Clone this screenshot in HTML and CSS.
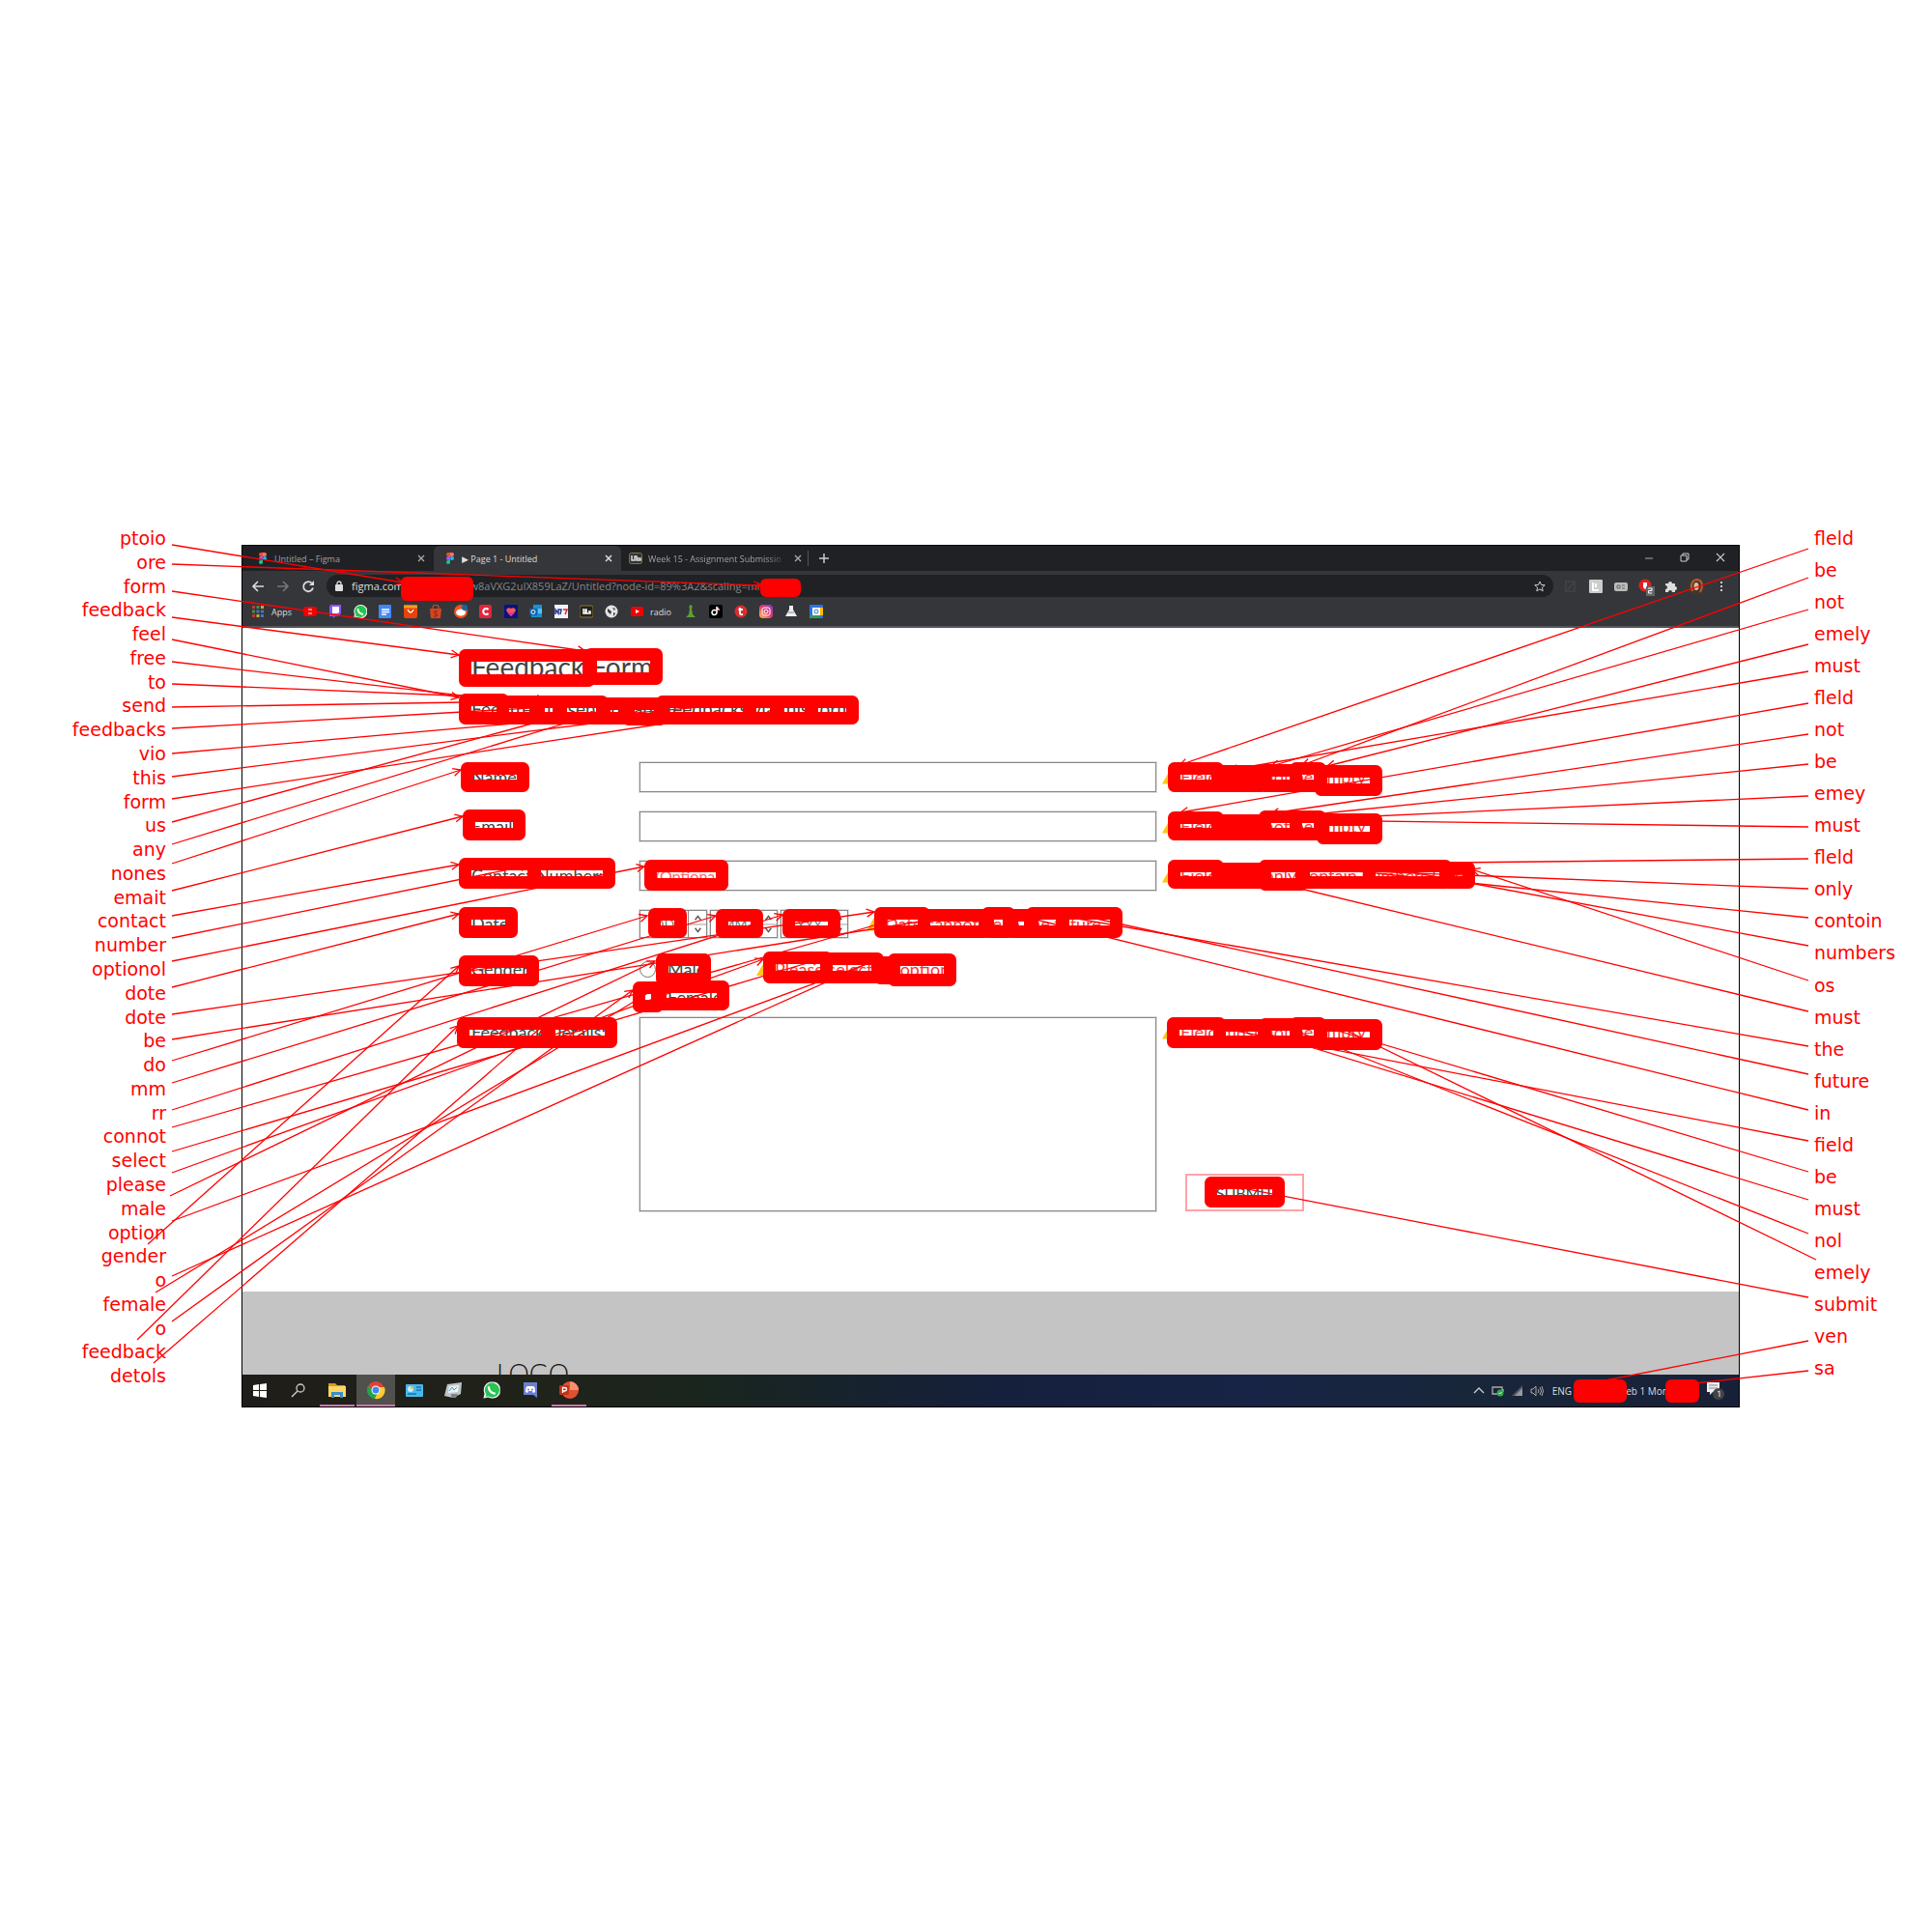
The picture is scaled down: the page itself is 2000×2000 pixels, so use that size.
FILE: index.html
```html
<!DOCTYPE html>
<html lang="en">
<head>
<meta charset="utf-8">
<title>Text detection results</title>
<link rel="stylesheet" href="styles.css">
</head>
<body>
<main class="figure">
  <ol class="labels labels-left">
    <li>ptoio</li><li>ore</li><li>form</li><li>feedback</li><li>feel</li><li>free</li><li>to</li><li>send</li><li>feedbacks</li><li>vio</li><li>this</li><li>form</li><li>us</li><li>any</li><li>nones</li><li>emait</li><li>contact</li><li>number</li><li>optionol</li><li>dote</li><li>dote</li><li>be</li><li>do</li><li>mm</li><li>rr</li><li>connot</li><li>select</li><li>please</li><li>male</li><li>option</li><li>gender</li><li>o</li><li>female</li><li>o</li><li>feedback</li><li>detols</li>
  </ol>

  <section class="screen">
    <header class="browser">
      <div class="tabs">
        <div class="tab">
          <svg class="figma" viewBox="0 0 8 12"><use href="#figma"/></svg>
          <span class="tab-title">Untitled – Figma</span>
          <button class="bare" aria-label="Close tab"><svg width="8" height="8" viewBox="0 0 8 8"><path d="M1 1l6 6M7 1L1 7" stroke="#aaa" stroke-width="1.3"/></svg></button>
        </div>
        <div class="tab tab-active">
          <svg class="figma" viewBox="0 0 8 12"><use href="#figma"/></svg>
          <span class="tab-title">▶ Page 1 - Untitled</span>
          <button class="bare" aria-label="Close tab"><svg width="8" height="8" viewBox="0 0 8 8"><path d="M1 1l6 6M7 1L1 7" stroke="#ddd" stroke-width="1.5"/></svg></button>
        </div>
        <div class="tab tab-last">
          <svg width="14" height="12" viewBox="0 0 14 12"><rect x=".5" y=".5" width="13" height="11" rx="2" fill="#333" stroke="#8a7437"/><path d="M3 3v5h3V4h2v4h4V6H8" stroke="#ddd" stroke-width="1.5" fill="none"/></svg>
          <span class="tab-title tab-fade">Week 15 - Assignment Submissio</span>
          <button class="bare" aria-label="Close tab"><svg width="8" height="8" viewBox="0 0 8 8"><path d="M1 1l6 6M7 1L1 7" stroke="#aaa" stroke-width="1.3"/></svg></button>
        </div>
        <button class="bare new-tab" aria-label="New tab"><svg width="10" height="10" viewBox="0 0 10 10"><path d="M5 0v10M0 5h10" stroke="#ccc" stroke-width="1.5"/></svg></button>
        <div class="window-buttons">
          <button class="bare" aria-label="Minimize"><svg width="10" height="10" viewBox="0 0 10 10"><path d="M1 6h8" stroke="#aaa"/></svg></button>
          <button class="bare" aria-label="Restore"><svg width="10" height="10" viewBox="0 0 10 10"><path d="M1 3h6v6H1zM3 3V1h6v6H7" stroke="#ccc" fill="none"/></svg></button>
          <button class="bare" aria-label="Close"><svg width="10" height="10" viewBox="0 0 10 10"><path d="M1 1l8 8M9 1L1 9" stroke="#ccc" stroke-width="1.2"/></svg></button>
        </div>
      </div>

      <div class="toolbar">
        <nav class="nav">
          <button class="bare" aria-label="Back"><svg width="14" height="14" viewBox="0 0 14 14"><path d="M13 7H2M7 2L2 7l5 5" stroke="#ddd" stroke-width="1.6" fill="none"/></svg></button>
          <button class="bare" aria-label="Forward"><svg width="14" height="14" viewBox="0 0 14 14"><path d="M1 7h11M7 2l5 5-5 5" stroke="#777" stroke-width="1.6" fill="none"/></svg></button>
          <button class="bare" aria-label="Reload"><svg width="14" height="14" viewBox="0 0 14 14"><path d="M12 8.500A5 5 0 1 1 10.500 3.500" stroke="#ddd" stroke-width="1.8" fill="none"/><path d="M13 1v5H8z" fill="#ddd"/></svg></button>
        </nav>
        <div class="address">
          <svg width="8" height="11" viewBox="0 0 8 11"><rect x="0" y="4" width="8" height="7" rx="1" fill="#ddd"/><path d="M2 5V3a2 2 0 0 1 4 0v2" stroke="#ddd" stroke-width="1.300" fill="none"/></svg>
          <span class="url"><b>figma.com</b>/proto/zOTkRw8aVXG2uIX859LaZ/Untitled?node-id=89%3A2&amp;scaling=min</span>
          <svg class="star" width="12" height="12" viewBox="0 0 12 12"><path d="M6 1l1.500 3.400 3.700.3-2.800 2.500.8 3.600L6 8.900l-3.200 1.900.8-3.600L.8 4.700l3.700-.3z" stroke="#ccc" fill="none"/></svg>
        </div>
        <div class="extensions">
          <svg viewBox="0 0 14 14"><path d="M2 2h9v10H2zM4 10l8-8" stroke="#444" fill="none" stroke-width="1.500"/></svg>
          <svg viewBox="0 0 14 14"><rect width="14" height="14" rx="1" fill="#ccc"/><path d="M4 3v8h6M7 4v4" stroke="#fff" stroke-width="2" fill="none"/></svg>
          <svg viewBox="0 0 14 14"><rect y="3" width="14" height="9" rx="2" fill="#bbb"/><path d="M3 6h3v3H3zM8 6h3M8 9h3" stroke="#666" fill="none"/></svg>
          <svg viewBox="0 0 14 14"><circle cx="6" cy="6" r="6.500" fill="#e02020"/><path d="M4 3h4v5L6 10 4 8z" fill="#fff"/><rect x="7" y="7" width="9" height="10" fill="#666"/><path d="M9 9h4v2.500H9.500V14H13" stroke="#fff" fill="none"/></svg>
          <svg viewBox="0 0 14 14"><path d="M1 4h3a2 2 0 1 1 4 0h3v3a2 2 0 1 1 0 4v2H8a2 2 0 0 0-4 0H1v-3a2 2 0 0 0 0-4z" fill="#ddd"/></svg>
          <svg viewBox="0 0 14 14"><circle cx="7" cy="7" r="8.500" fill="#49352a"/><path d="M3 12C0 4 4 0 8 0c6 1 6 8 3 13" stroke="#b2622f" stroke-width="2" fill="none"/><ellipse cx="7" cy="7" rx="2.500" ry="4" fill="#e2bda0"/></svg>
          <svg viewBox="0 0 14 14"><path d="M6 2h2v2H6zM6 6h2v2H6zM6 10h2v2H6z" fill="#ccc"/></svg>
        </div>
      </div>

      <nav class="bookmarks">
        <svg viewBox="0 0 14 14"><path d="M1 1h3v3H1zM1 10h3v3H1z" fill="#c0392b"/><path d="M5.500 1h3v3h-3zM1 5.500h3v3H1z" fill="#3f8f4f"/><path d="M10 1h3v3h-3zM5.500 10h3v3h-3z" fill="#c9a437"/><path d="M5.500 5.500h3v3h-3zM10 5.500h3v3h-3zM10 10h3v3h-3z" fill="#3c78c8"/></svg>
        <a class="bookmark-apps" href="#">Apps</a>
        <svg viewBox="0 0 14 14"><rect y="2" width="14" height="10" rx="3" fill="#f00000"/><path d="M5 5h4M5 9h4" stroke="#fff"/></svg>
        <svg viewBox="0 0 14 14"><path d="M2 0h11v9l-3 3H7l-2 2v-2H1V3z" fill="#8c55f0"/><path d="M4 2h7v6L9 9H4z" fill="#fff"/></svg>
        <svg viewBox="0 0 14 14"><use href="#whatsapp"/></svg>
        <svg viewBox="0 0 14 14"><rect width="13" height="14" rx="1" fill="#4387f5"/><path d="M3 5h8M3 7.500h8M3 10h5" stroke="#fff" stroke-width="1.300"/></svg>
        <svg viewBox="0 0 14 14"><rect width="14" height="14" rx="2" fill="#e8430c"/><path d="M0 2h14" stroke="#f59d20" stroke-width="3"/><path d="M4 5q3 6 6 0" stroke="#fff" stroke-width="1.300" fill="none"/></svg>
        <svg viewBox="0 0 14 14"><path d="M1 4h12l-1 10H2z" fill="#d8431f"/><path d="M4 5V3a3 3 0 0 1 6 0v2" stroke="#d8431f" fill="none" stroke-width="1.300"/><path d="M9 7q-5-1-3 2 4 1 2 3H5" stroke="#7b2412" fill="none"/></svg>
        <svg viewBox="0 0 14 14"><circle cx="7" cy="7" r="7" fill="#f4511e"/><ellipse cx="7" cy="8" rx="5" ry="3.500" fill="#fff"/><circle cx="11" cy="3" r="3" fill="#1565a8"/></svg>
        <svg viewBox="0 0 14 14"><rect width="13" height="14" rx="2" fill="#e3263c"/><path d="M9.500 5a3 3 0 1 0 0 4" stroke="#fff" stroke-width="2" fill="none"/></svg>
        <svg viewBox="0 0 14 14"><rect width="14" height="14" rx="1" fill="#0c1083"/><path d="M7 12L2 6a3 3 0 0 1 5-2 3 3 0 0 1 5 2z" fill="#ef5a5a"/><path d="M7 12L3 8h8z" fill="#e8378c"/></svg>
        <svg viewBox="0 0 14 14"><path d="M4 0h9v13H2V6h2z" fill="#1b8fd6"/><path d="M9 4h4v5H9z" fill="#55c4f5"/><rect x="0" y="4" width="8" height="7" fill="#0c62ab"/><circle cx="4" cy="7.500" r="2" stroke="#fff" fill="none"/></svg>
        <svg viewBox="0 0 14 14"><rect width="14" height="14" fill="#f4f4f4"/><path d="M1 10V5l3 4V5h3l-1 5" stroke="#2a3c9a" stroke-width="1.500" fill="none"/><path d="M9 5h4l-2 5" stroke="#dd2233" stroke-width="1.500" fill="none"/></svg>
        <svg viewBox="0 0 14 14"><rect y="1" width="14" height="12" rx="2" fill="#24221d" stroke="#8a7437"/><path d="M4 4v5h2V5h1v4h4V7H9" stroke="#fff" stroke-width="1.500" fill="none"/></svg>
        <svg viewBox="0 0 14 14"><circle cx="7" cy="7" r="6.500" fill="#e3e3e3"/><path d="M3 4l4 3-1 3-3-3zM8 3l3 1-1 2zM9 8l2 1-2 3z" fill="#35363a"/></svg>
        <svg viewBox="0 0 14 14"><rect x="1" y="2" width="13" height="10" rx="2" fill="#f00000"/><path d="M6 5l4 2-4 2z" fill="#fff"/></svg>
        <a class="bookmark-radio" href="#">radio</a>
        <svg viewBox="0 0 14 14"><path d="M7 0a2.500 2.500 0 0 1 1 4l1 6 3 3H2l3-3 1-6a2.500 2.500 0 0 1 1-4z" fill="#5da130"/></svg>
        <svg viewBox="0 0 14 14"><rect width="14" height="14" rx="2" fill="#000"/><path d="M7 6a2.500 2.500 0 1 0 1 2V2q1 3 3 3" stroke="#fff" stroke-width="1.600" fill="none"/><path d="M9 2v1q1 1.500 2 1.500" stroke="#f3315d" fill="none"/></svg>
        <svg viewBox="0 0 14 14"><circle cx="7" cy="7" r="6.500" fill="#d5302e"/><path d="M6 3v6q0 1.500 3 1M4.500 5h4.500" stroke="#fff" stroke-width="1.800" fill="none"/></svg>
        <svg viewBox="0 0 14 14"><defs><linearGradient id="insta" x1="0" y1="1" x2="1" y2="0"><stop offset="0" stop-color="#fdc945"/><stop offset=".5" stop-color="#e8386c"/><stop offset="1" stop-color="#7b3fd3"/></linearGradient></defs><rect width="14" height="14" rx="4" fill="url(#insta)"/><rect x="3" y="3" width="8" height="8" rx="2" fill="none" stroke="#fff"/><circle cx="7" cy="7" r="2" fill="none" stroke="#fff"/></svg>
        <svg viewBox="0 0 14 14"><path d="M5 1h4v4l4 7H1l4-7z" fill="#eee"/><path d="M4 8h6" stroke="#888"/></svg>
        <svg viewBox="0 0 14 14"><rect width="14" height="14" rx="1" fill="#2f72e0"/><rect x="3" y="3" width="8" height="8" fill="#fff"/><path d="M11 3h3v8h-3z" fill="#fbbc05"/><path d="M0 11h11v3H0z" fill="#2d9e4f"/><circle cx="7" cy="7" r="2" fill="none" stroke="#2f72e0"/></svg>
      </nav>
    </header>

    <form class="feedback">
      <h1>Feedback Form</h1>
      <p class="intro">Feel free to send us any feedbacks via this form</p>

      <div class="field">
        <label class="name" for="name">Name:</label>
        <input class="box" id="name" type="text">
        <span class="warning">Field must not be empty</span>
      </div>
      <div class="field">
        <label class="name" for="email">Email:</label>
        <input class="box" id="email" type="text">
        <span class="warning">Field must not be empty</span>
      </div>
      <div class="field">
        <label class="name" for="phone">Contact Number:</label>
        <input class="box" id="phone" type="text" placeholder="(Optional)">
        <span class="warning">Field must only contain numbers 0-9</span>
      </div>
      <div class="field field-date">
        <label class="name" for="day">Date:</label>
        <div class="date">
          <div class="spin"><input id="day" type="text" placeholder="DD"><svg viewBox="0 0 19 27"><use href="#arrows"/></svg></div>
          <div class="spin"><input type="text" placeholder="MM" aria-label="Month"><svg viewBox="0 0 19 27"><use href="#arrows"/></svg></div>
          <div class="spin"><input type="text" placeholder="YYYY" aria-label="Year"><svg viewBox="0 0 19 27"><use href="#arrows"/></svg></div>
          <span class="warning">Date cannot be in the future</span>
        </div>
      </div>
      <div class="field field-gender">
        <span class="name">Gender:</span>
        <div class="options">
          <div class="option"><label class="choice"><input type="radio" name="gender">Male</label><span class="warning">Please select an option</span></div>
          <div class="option"><label class="choice"><input type="radio" name="gender">Female</label></div>
        </div>
      </div>
      <div class="field field-details">
        <label class="name" for="details">Feedback Details:</label>
        <textarea class="box" id="details"></textarea>
        <div class="side">
          <span class="warning">Field must not be empty</span>
          <button class="submit" type="button">SUBMIT</button>
        </div>
      </div>
    </form>

    <footer class="footer">LOGO</footer>

    <div class="taskbar">
      <div class="apps">
        <button class="bare app" aria-label="Start"><svg viewBox="0 0 20 20"><path d="M3 5l6-1v6H3zM10 4l7-1v7h-7zM3 11h6v6l-6-1zM10 11h7v7l-7-1z" fill="#fff"/></svg></button>
        <button class="bare app" aria-label="Search"><svg viewBox="0 0 20 20"><circle cx="12" cy="8" r="4" stroke="#ccc" stroke-width="1.300" fill="none"/><path d="M9 11l-6 6" stroke="#ccc" stroke-width="1.500"/></svg></button>
        <button class="bare app app-open" aria-label="File Explorer"><svg viewBox="0 0 20 20"><path d="M1 3h7l2 2h8v12H1z" fill="#d79b1e"/><path d="M1 6h18v11H1z" fill="#fbd667"/><path d="M4 18v-6h12v6h-3v-3H7v3z" fill="#368fc9"/></svg></button>
        <button class="bare app app-open app-current" aria-label="Chrome"><svg viewBox="0 0 20 20"><circle cx="10" cy="10" r="9" fill="#e24134"/><path d="M2 6a9 9 0 0 0 7 13l4-8z" fill="#26a150"/><path d="M19 7a9 9 0 0 1-10 12l4-9-3-3z" fill="#fccb2f"/><circle cx="10" cy="10" r="4.500" fill="#fff"/><circle cx="10" cy="10" r="3.500" fill="#4286f5"/></svg></button>
        <button class="bare app" aria-label="Control Panel"><svg viewBox="0 0 20 20"><rect x="1" y="4" width="18" height="13" rx="1" fill="#48b8ee"/><circle cx="6" cy="9" r="3" fill="#c9edff"/><path d="M6 9V6a3 3 0 0 1 3 3z" fill="#f4c43c"/><path d="M12 7h5M12 10h5M3 14h9" stroke="#1c71a6" stroke-width="1.300"/></svg></button>
        <button class="bare app" aria-label="Monitor"><svg viewBox="0 0 20 20"><path d="M4 4l15-2-1 12-8 4-9-2z" fill="#bcc4c8"/><path d="M6 6l10-1-1 7-10 1z" fill="#e9f4f8"/><path d="M6 11l3-4 2 3 3-3" stroke="#3d9bc6" fill="none"/><path d="M8 14l7 0-2 4H8z" fill="#7d8588"/></svg></button>
        <button class="bare app" aria-label="WhatsApp"><svg viewBox="-1 -1 16 16"><use href="#whatsapp" width="14" height="14"/></svg></button>
        <button class="bare app" aria-label="Discord"><svg viewBox="0 0 20 20"><path d="M3 2h14v16l-4-3H3z" fill="#6a7fd0"/><path d="M5 12q0-6 2-6h6q2 0 2 6l-2 1-1-2H8l-1 2z" fill="#fff"/><circle cx="8" cy="9.500" r="1" fill="#6a7fd0"/><circle cx="12" cy="9.500" r="1" fill="#6a7fd0"/></svg></button>
        <button class="bare app app-open" aria-label="PowerPoint"><svg viewBox="0 0 20 20"><circle cx="11" cy="10" r="9" fill="#e0512f"/><path d="M11 1a9 9 0 0 1 9 9h-9z" fill="#f58f70"/><rect x="0" y="5" width="10" height="10" rx="1" fill="#be3217"/><path d="M3.500 13V7.500h2q2 0 2 1.700t-2 1.800h-2" stroke="#fff" stroke-width="1.300" fill="none"/></svg></button>
      </div>
      <div class="tray">
        <svg width="12" height="12" viewBox="0 0 12 12"><path d="M1 8l5-5 5 5" stroke="#ccc" fill="none" stroke-width="1.300"/></svg>
        <svg width="14" height="12" viewBox="0 0 14 12"><path d="M1 2h10v7H1zM12 4v3" stroke="#aaa" fill="none" stroke-width="1.300"/><circle cx="9" cy="8" r="3.500" fill="#30a847"/><path d="M7.500 8l1 1 2-2" stroke="#fff" fill="none"/></svg>
        <svg width="12" height="12" viewBox="0 0 12 12"><path d="M11 0v11H0z" fill="#556"/><path d="M11 3v8H3z" fill="#999"/></svg>
        <svg width="14" height="12" viewBox="0 0 14 12"><path d="M1 4h2l3-3v10L3 8H1zM8 4q2 2 0 4M10 2q3 4 0 8M12 1q3 5 0 10" stroke="#aaa" fill="none"/></svg>
        <span class="lang">ENG</span>
        <time>Feb 1 Mon</time>
        <svg class="notice" width="20" height="20" viewBox="0 0 20 20"><path d="M1 1h13v10H7l-3 3v-3H1z" fill="#eee"/><path d="M3 4h9M3 7h9" stroke="#889"/><circle cx="13" cy="13" r="6" fill="#444"/><path d="M12 11l2-1v6" stroke="#ddd" fill="none"/></svg>
      </div>
    </div>
  </section>

  <ol class="labels labels-right">
    <li>fleld</li><li>be</li><li>not</li><li>emely</li><li>must</li><li>fleld</li><li>not</li><li>be</li><li>emey</li><li>must</li><li>fleld</li><li>only</li><li>contoin</li><li>numbers</li><li>os</li><li>must</li><li>the</li><li>future</li><li>in</li><li>field</li><li>be</li><li>must</li><li>nol</li><li>emely</li><li>submit</li><li>ven</li><li>sa</li>
  </ol>

  <svg class="marks" viewBox="0 0 2000 2000" aria-hidden="true">
    <defs>
      <marker id="head" markerWidth="20" markerHeight="20" refX="10" refY="10" orient="auto" markerUnits="userSpaceOnUse"><path d="M2 6l8 4-8 4" fill="none" stroke="red" stroke-width="1.300"/></marker>
    </defs>
    <g id="boxes"></g>
    <g id="solids"></g>
    <g id="arrows-layer"></g>
  </svg>
</main>

<svg class="symbols" aria-hidden="true">
  <symbol id="figma" viewBox="0 0 8 12"><path d="M4 0H2a2 2 0 0 0 0 4h2z" fill="#f24e1e"/><path d="M4 0h2a2 2 0 0 1 0 4H4z" fill="#ff7262"/><path d="M4 4H2a2 2 0 0 0 0 4h2z" fill="#a259ff"/><circle cx="6" cy="6" r="2" fill="#1abcfe"/><path d="M4 8H2a2 2 0 1 0 2 2z" fill="#0acf83"/></symbol>
  <symbol id="whatsapp" viewBox="0 0 14 14"><path d="M7 0a7 7 0 1 1-3 13L0 14l1-4A7 7 0 0 1 7 0z" fill="#eee"/><path d="M7 1a6 6 0 1 1-3 11l-2 .5.500-2A6 6 0 0 1 7 1z" fill="#25c451"/><path d="M4.500 4q0 5 5.500 6" stroke="#fff" stroke-width="1.800" fill="none"/></symbol>
  <symbol id="arrows" viewBox="0 0 19 27"><path d="M0 14h19" stroke="#999"/><path d="M7 9l3-4 3 4M7 18l3 4 3-4" stroke="#555" stroke-width="1.500" fill="none"/></symbol>
</svg>
<script src="marks.js"></script>
</body>
</html>
```
FILE: styles.css
```css
* { box-sizing: border-box; }

body {
  margin: 0;
  background: #fff;
  font-family: Lato, "Liberation Sans", sans-serif;
  color: #444;
}

.symbols { display: none; }

.figure {
  position: relative;
  min-height: 100vh;
  padding-top: 564px;
  display: grid;
  grid-template-columns: 250px 1fr 199px;
  align-content: start;
}

.marks {
  position: absolute;
  top: 0;
  left: 0;
  width: 100%;
  pointer-events: none;
}

.labels {
  list-style: none;
  margin: -19px 0 20px;
  padding: 0;
  display: grid;
  grid-auto-rows: 1fr;
  font: 19px/24px "DejaVu Sans", sans-serif;
  color: #f00;
}
.labels-left { text-align: right; padding-right: 78px; }
.labels-right { padding-left: 77px; }

.screen { border: 1px solid #000; min-width: 0; }

.bare {
  display: flex;
  align-items: center;
  justify-content: center;
  padding: 0;
  border: 0;
  background: none;
}

/* Browser chrome */
.browser {
  background: #35363a;
  border-bottom: 2px solid #55565a;
  font-family: "Open Sans", "Noto Sans", sans-serif;
  font-size: 9px;
  color: #ddd;
}
.tabs {
  display: flex;
  align-items: center;
  height: 26px;
  padding-left: 4px;
  background: #202124;
}
.tab {
  display: flex;
  align-items: center;
  width: 194px;
  height: 26px;
  padding: 0 9px 0 13px;
  gap: 8px;
  color: #a0a0a0;
}
.tab-active { background: #35363a; border-radius: 6px 6px 0 0; color: #ddd; }
.tab-last { padding-left: 8px; gap: 6px; }
.tab-last::after { content: ""; width: 1px; height: 16px; margin-right: -9px; background: #555; }
.figma { width: 8px; height: 12px; }
.tab-title { flex: 1; overflow: hidden; white-space: nowrap; }
.tab-fade { mask-image: linear-gradient(90deg, #000 85%, transparent); }
.new-tab { margin-left: 11px; }
.window-buttons { display: flex; gap: 27px; margin: 0 14px 3px auto; }

.toolbar {
  display: flex;
  align-items: center;
  height: 31px;
}
.nav { display: flex; gap: 12px; padding: 0 12px 0 9px; }
.address {
  flex: 1;
  display: flex;
  align-items: center;
  gap: 9px;
  min-width: 0;
  height: 23px;
  padding: 0 8px 0 9px;
  border-radius: 12px;
  background: #202124;
  font-size: 11px;
  color: #85868a;
}
.url { flex: 1; overflow: hidden; white-space: nowrap; }
.url b { font-weight: 400; color: #ddd; }
.extensions { display: flex; gap: 12px; padding: 0 11px; }
.extensions svg { width: 14px; height: 14px; overflow: visible; }

.bookmarks {
  display: flex;
  align-items: center;
  gap: 12px;
  height: 26px;
  padding: 0 0 4px 9px;
}
.bookmarks svg { width: 14px; height: 14px; }
.bookmarks a { color: #ddd; text-decoration: none; margin-left: -5px; }
.bookmark-apps { width: 21px; }
.bookmark-radio { width: 23px; }

/* Feedback form */
.feedback { padding: 20px 0 83px 237px; background: #fff; }
.feedback h1 { margin: 0; font-size: 28px; line-height: 40px; font-weight: 400; }
.intro { margin: 12px 0 43px; font-size: 19px; line-height: 24px; }

.field {
  display: grid;
  grid-template-columns: 174px 535px 1fr;
  column-gap: 0;
  min-height: 31px;
  margin-bottom: 20px;
  font-size: 18px;
  line-height: 31px;
}
.name { white-space: nowrap; }
.box, .spin {
  border: 1px solid #888;
  box-shadow: 0 0 0 1px #ddd;
  border-radius: 0;
  background: #fff;
}
.box { width: 100%; padding: 0 16px; font: 16px Lato, sans-serif; outline: 0; }
.box::placeholder { color: #f66; opacity: 1; }

.warning {
  display: flex;
  align-items: center;
  gap: 3px;
  margin-left: 6px;
  font-size: 18px;
  line-height: 31px;
  color: #f33;
  white-space: nowrap;
}
.warning::before {
  content: "";
  width: 16px;
  height: 14px;
  background: #ffc414;
  clip-path: polygon(50% 0, 100% 100%, 0 100%);
}

.field-date { min-height: 29px; line-height: 29px; }
.date { display: flex; gap: 3px; height: 29px; }
.date .warning { margin-left: 16px; line-height: 29px; }
.spin { display: flex; width: 70px; }
.spin input {
  width: 50px;
  min-width: 0;
  padding: 0;
  border: 0;
  border-right: 1px solid #888;
  font: 14px Lato, sans-serif;
  text-align: center;
}
.spin svg { width: 18px; height: 27px; }

.field-gender { line-height: 24px; margin-bottom: 9px; }
.options { display: grid; gap: 5px; }
.option { display: flex; height: 24px; }
.choice { display: flex; align-items: center; gap: 12px; width: 115px; }
.choice input {
  appearance: none;
  width: 17px;
  height: 17px;
  margin: 0;
  border: 1px solid #777;
  border-radius: 50%;
}
.option .warning { line-height: 24px; }

.field-details { margin-bottom: 0; }
textarea.box { height: 201px; resize: none; }
.side { display: flex; flex-direction: column; justify-content: space-between; }
.submit {
  width: 123px;
  height: 39px;
  margin-left: 30px;
  border: 2px solid #ffa3a8;
  background: #fff;
  font: 16px Lato, sans-serif;
  color: #444;
}

.footer {
  height: 86px;
  padding: 70px 0 0 263px;
  overflow: hidden;
  background: #c4c4c4;
  font-size: 27px;
  font-weight: 300;
  line-height: 30px;
  color: #111;
}

/* Taskbar */
.taskbar {
  display: flex;
  justify-content: space-between;
  height: 33px;
  background: linear-gradient(90deg, #1f1d19, #20231a 20%, #19251f 32%, #15203c 50%, #172445 68%, #18263a 82%, #182038);
}
.apps { display: flex; gap: 4px; }
.app { width: 36px; border-bottom: 2px solid transparent; }
.app svg { width: 20px; height: 20px; }
.app-open { border-color: #d078ad; }
.app-current { width: 40px; margin: 0 -2px; background: #50504c; }
.tray {
  display: flex;
  align-items: center;
  gap: 7px;
  padding-right: 14px;
  font: 10px "Open Sans", "Noto Sans", sans-serif;
  color: #ddd;
}
.lang { margin: 0 44px 0 2px; }
.notice { margin-left: 32px; }
```
FILE: marks.js
```javascript
// Inner edges of each detected word: left, top, right, bottom.
const boxes = [
  [488, 685, 603, 698], [618, 684, 673, 696],
  [488, 731, 514, 737], [527, 733, 548, 737], [564, 733, 572, 737], [587, 733, 617, 737],
  [632, 735, 641, 737], [657, 735, 677, 738], [692, 733, 769, 737], [783, 733, 797, 737],
  [812, 733, 833, 737], [847, 733, 876, 737],
  [490, 802, 535, 807], [492, 851, 531, 857],
  [488, 901, 546, 907], [560, 901, 624, 907], [680, 903, 741, 909],
  [488, 952, 523, 958], [684, 953, 698, 958], [754, 954, 777, 958], [823, 954, 857, 958],
  [488, 1002, 545, 1008], [692, 1000, 723, 1007], [668, 1029, 674, 1035], [690, 1028, 742, 1033],
  [486, 1066, 560, 1072], [575, 1066, 626, 1072],
  [803, 998, 849, 1005], [862, 999, 902, 1005], [932, 1000, 977, 1008],
  [918, 952, 950, 958], [963, 954, 1013, 958], [1029, 952, 1038, 958], [1054, 954, 1060, 958],
  [1075, 952, 1093, 958], [1107, 952, 1149, 958],
  [1222, 802, 1254, 807], [1316, 804, 1335, 807], [1348, 802, 1360, 807], [1374, 805, 1418, 811],
  [1222, 853, 1254, 857], [1316, 852, 1335, 857], [1348, 852, 1360, 857], [1376, 855, 1418, 861],
  [1222, 903, 1254, 907], [1316, 903, 1341, 909], [1356, 903, 1411, 907], [1424, 903, 1490, 907], [1506, 905, 1514, 907],
  [1221, 1066, 1256, 1072], [1269, 1068, 1302, 1072], [1316, 1067, 1335, 1072], [1348, 1066, 1360, 1072], [1374, 1068, 1418, 1074],
  [1260, 1231, 1317, 1237]
];

// Words too short for a visible opening: outer left, top, right, bottom.
const solids = [
  [415, 597, 490, 622], [787, 599, 829, 618], [1629, 1428, 1684, 1452], [1724, 1428, 1759, 1452],
  [1256, 792, 1312, 820], [1256, 843, 1312, 870], [1256, 893, 1312, 920], [905, 990, 928, 1019]
];

// Label end and word end of each arrow.
const arrows = [
  [178, 564, 417, 603], [178, 584, 788, 606], [178, 612, 606, 674], [178, 639, 475, 678],
  [178, 662, 475, 722], [178, 685, 514, 724], [178, 708, 564, 724], [178, 732, 600, 725],
  [178, 754, 692, 725], [178, 780, 783, 727], [178, 804, 683, 740], [178, 827, 720, 744],
  [178, 851, 580, 741], [178, 874, 620, 738], [178, 894, 477, 797], [178, 922, 479, 845],
  [178, 948, 475, 895], [178, 971, 547, 896], [178, 995, 667, 897], [178, 1022, 475, 946],
  [178, 1050, 905, 944], [178, 1076, 1016, 944], [178, 1098, 670, 948], [178, 1121, 741, 948],
  [178, 1149, 810, 947], [178, 1167, 950, 945], [178, 1192, 849, 993], [178, 1214, 790, 993],
  [176, 1238, 678, 995], [178, 1264, 908, 994], [153, 1288, 475, 1000], [178, 1321, 908, 993],
  [161, 1338, 679, 1023], [178, 1368, 655, 1025], [142, 1387, 474, 1062], [159, 1411, 562, 1062],
  [1872, 568, 1221, 792], [1872, 598, 1348, 792], [1872, 631, 1316, 793], [1872, 667, 1374, 793],
  [1872, 695, 1273, 797], [1872, 728, 1222, 841], [1872, 760, 1316, 842], [1872, 791, 1350, 844],
  [1872, 824, 1376, 847], [1872, 856, 1273, 848], [1872, 889, 1222, 896], [1872, 920, 1316, 898],
  [1872, 950, 1356, 897], [1872, 979, 1424, 896], [1872, 1015, 1524, 900], [1872, 1047, 1272, 902],
  [1872, 1083, 1075, 944], [1872, 1112, 1107, 945], [1872, 1149, 1052, 947], [1872, 1181, 1221, 1056],
  [1872, 1213, 1348, 1056], [1872, 1242, 1269, 1057], [1872, 1277, 1316, 1057], [1880, 1304, 1374, 1057],
  [1872, 1343, 1250, 1223], [1872, 1388, 1636, 1434], [1872, 1419, 1727, 1435]
];

// The stroke is 13 units wide and lies outside the inner edges.
document.getElementById("boxes").innerHTML = boxes.map(([l, t, r, b]) =>
  `<rect x="${l - 6.5}" y="${t - 6.5}" width="${r - l + 13}" height="${b - t + 13}" fill="none" stroke="red" stroke-width="13" stroke-linejoin="round"/>`).join("");
document.getElementById("solids").innerHTML = solids.map(([l, t, r, b]) =>
  `<rect x="${l}" y="${t}" width="${r - l}" height="${b - t}" rx="6" fill="red"/>`).join("");
document.getElementById("arrows-layer").innerHTML = arrows.map(([a, b, c, d]) =>
  `<path d="M${a} ${b}L${c} ${d}" stroke="red" stroke-width="1.3" marker-end="url(#head)"/>`).join("");
```
